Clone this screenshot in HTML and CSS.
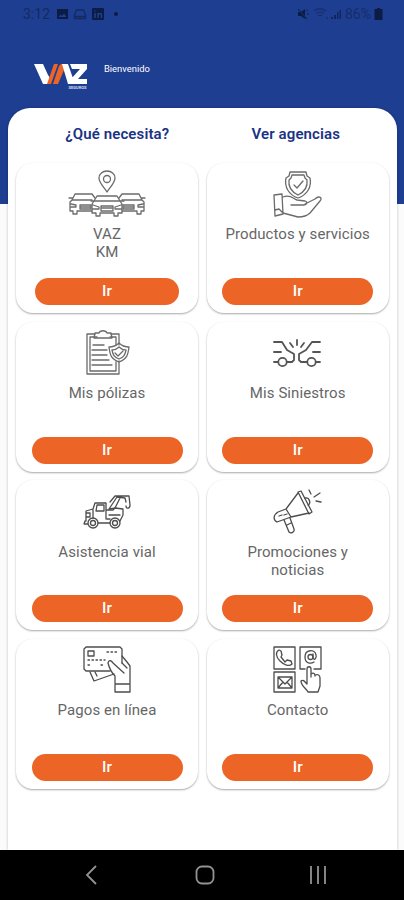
FILE: index.html
```
<!DOCTYPE html>
<html lang="es">
<head>
  <meta charset="UTF-8"/>
  <meta name="viewport" content="width=device-width, initial-scale=1.0"/>
  <title>VAZ Seguros</title>
  <link rel="stylesheet" href="styles.css">
</head>
<body>

  <header class="header">
    <div class="status-bar">
      <div class="status-left">
        <span class="clock">3:12</span>
        <svg width="70" height="14" viewBox="0 0 70 14">
          <path fill-rule="evenodd" d="M1 2h11v10H1zM2.500 10h8L8 6.500 6 9 4.500 7.500z"/>
          <path class="thin" d="M20.500 3h7l2 5v3.500h-11V8zM18.500 9.500h11"/>
          <rect x="36" y="1" width="12" height="12" rx="1"/>
          <path class="in-mark" d="M39 6v5M39 3.500v1M42 11V6M42 8c1-2 3.500-2 3.500 0v3"/>
          <circle cx="60" cy="7" r="2"/>
        </svg>
      </div>
      <div class="status-right">
        <svg width="48" height="14" viewBox="0 0 48 14">
          <path d="M2 5h3l4-3v10L5 9H2z"/>
          <path class="thin" d="M2 2l9 10M10 4l2-1M11 7h2"/>
          <path class="thin faint" d="M18 4c4-3 8-3 12 0M20 6.500c3-2 6-2 8 0M22 9c1.500-1 3-1 4 0M30 11h2"/>
          <path class="faint" d="M35 12V10h2v2zM38 12V8h2v4zM41 12V5h1.500v7zM43.500 12V3H45v9z"/>
        </svg>
        <span class="battery-level">86%</span>
        <svg width="9" height="12" viewBox="0 0 9 12"><path d="M3 0h3v1h2.500v11h-8V1H3z"/></svg>
      </div>
    </div>

    <div class="brand">
      <svg class="logo" width="55" height="27" viewBox="0 0 55 27">
        <path class="white" d="M0 2h9l5 11 2 3-2 6h-5z"/>
        <path class="orange" d="M20 2h4l-7 20h-4zM25 4l2-2h2l1 6-6 14h-5z"/>
        <path class="white" d="M28 2h6l7 20h-7zM36 2h17v5l-9 10h9v5H37v-5l9-10h-8z"/>
        <text x="34.500" y="26.500" textLength="18">SEGUROS</text>
      </svg>
      <span class="welcome">Bienvenido</span>
    </div>
  </header>

  <main class="panel">
    <div class="tabs">
      <a class="tab">¿Qué necesita?</a>
      <a class="tab">Ver agencias</a>
    </div>

    <section class="grid">
      <article class="card">
        <svg class="icon wide" viewBox="0 0 78 48">
          <path d="M39 22c-3-5-8-9-8-14a8 7 0 0 1 16 0c0 5-5 9-8 14z"/>
          <circle cx="39" cy="9" r="3.500"/>
          <path d="M26 31l3-5h20l3 5 2 3v9h-4v3h-4v-3H32v3h-4v-3h-4v-9zM26 31h26M23 31h3M52 31h4M25 35l6 2v2h-6M53 35l-6 2v2h6M33 36h12v5H33zM34 38h10"/>
          <path d="M27 28l-3-4H7l-3 6-2 2v9h3v3h4v-3h15M4 30h20M1 28h4M3 34l5 1v2H3M12 35h11v4H12zM13 37h10"/>
          <path d="M51 28l3-4h17l3 6 2 2v9h-3v3h-4v-3H54M54 30h20M73 28h4M75 34l-5 1v2h5M55 35h11v4H55zM56 37h9"/>
        </svg>
        <h2 class="card-title">VAZ<br>KM</h2>
        <button class="go narrow">Ir</button>
      </article>

      <article class="card">
        <svg class="icon" viewBox="0 0 48 48">
          <path d="M16 2h16l1 4 3 2c2 9-3 17-12 20C15 25 10 17 12 8l3-2z"/>
          <path d="M18 5h12l1 3 2 2c1 7-3 12-9 15-6-3-10-8-9-15l2-2z"/>
          <path d="M20 15l3 3 6-7"/>
          <path d="M0 25l8-1 1 20-8 2zM1 40l4-1 4 4M9 27c8-3 10 2 14 3l8 1c3 1 2 4-1 4H17M31 34l10-5c4-4 8-1 5 2L36 43c-3 3-6 4-12 4L9 43"/>
        </svg>
        <h2 class="card-title">Productos y servicios</h2>
        <button class="go">Ir</button>
      </article>

      <article class="card">
        <svg class="icon" viewBox="0 0 48 48">
          <path d="M12 5H4v40h32V32M28 5h8v11M14 8H7v34h26V33M27 8h6v8"/>
          <path d="M12 4h4c1-3 7-3 8 0h4l1 5H11z"/>
          <path d="M10 16h11M9 21h15M9 26h15M9 31h17M9 36h20"/>
          <path d="M36 14c3 3 6 4 10 4-1 8-2 12-10 15-8-3-9-7-10-15 4 0 7-1 10-4z"/>
          <path d="M36 18c2 2 4 3 7 3-1 5-2 7-7 9-5-2-6-4-7-9 3 0 5-1 7-3zM32 24l3 3 5-5"/>
        </svg>
        <h2 class="card-title">Mis pólizas</h2>
        <button class="go">Ir</button>
      </article>

      <article class="card">
        <svg class="icon bold" viewBox="0 0 48 48">
          <path d="M0 13h8l5 8 7 4v6l-2 2h-5M0 33h4M0 23h7"/>
          <circle cx="8.500" cy="33" r="4.200"/>
          <path d="M46 13h-8l-6 8-7 4v6l2 2h6M42 33h4M39 23h7"/>
          <circle cx="37.500" cy="33" r="4.200"/>
          <path d="M23 11v5M16 14l3 4M30 14l-3 4"/>
        </svg>
        <h2 class="card-title">Mis Siniestros</h2>
        <button class="go">Ir</button>
      </article>

      <article class="card">
        <svg class="icon dark" viewBox="0 0 48 48">
          <path d="M3 34V24l7-2 2-6h11v16M14 18h7v6h-8zM10 23v8M2 34l-1 3h4M15 36h12M23 23h7l2-2 8 1v6l-3 6M3 26h4v4H3M26 28h11M24 32h3"/>
          <path d="M26 22l8-12 8 1 1 4M27 15l5-6h14l1 9c0 4-4 4-4 1M32 21l5-10M26 22l7-1"/>
          <circle cx="10" cy="36" r="5"/><circle cx="10" cy="36" r="2.500"/>
          <circle cx="32" cy="36" r="5"/><circle cx="32" cy="36" r="2.500"/>
        </svg>
        <h2 class="card-title">Asistencia vial</h2>
        <button class="go">Ir</button>
      </article>

      <article class="card">
        <svg class="icon dark" viewBox="0 0 48 48">
          <path d="M24 5l3-1 11 21-3 2zM24 6L12 22 4 25c-5 3-5 8-1 10l14-5 18-4M12 22l5 8"/>
          <path d="M10 33l5 12c2 2 6 0 5-3l-4-11M31 11c5-1 6 6 3 7M5 29l3-1M10 28l3-1M13 38l4-2"/>
          <path d="M35 3l2 4M46 6l-6 4M42 14l5 1"/>
        </svg>
        <h2 class="card-title">Promociones y noticias</h2>
        <button class="go">Ir</button>
      </article>

      <article class="card">
        <svg class="icon dark" viewBox="0 0 48 48">
          <path d="M3 1h34l2 2v14M27 25H3l-2-2V3l2-2"/>
          <path d="M5 5h6v5H5z"/>
          <path class="dashed" d="M24 6h11M5 14h17M5 19h4M18 19h4"/>
          <path d="M7 26l4 9 20-7M12 26l2 4"/>
          <path d="M32 37v-7c-4-4-6-9-7-13 1-4 4-2 5 0l11 10M39 10l5 6 3 4v17M39 17l5 5M32 38h15v8H32z"/>
        </svg>
        <h2 class="card-title">Pagos en línea</h2>
        <button class="go">Ir</button>
      </article>

      <article class="card">
        <svg class="icon dark" viewBox="0 0 48 48">
          <path d="M0 1h21v22H0zM26 1h21v22h-7M31 23h-5V1M0 26h21v20H0z"/>
          <path d="M5 4c-4 2-3 7 1 11s9 6 12 3l-1-3-4-1-2 2-4-5 1-2-1-4z"/>
          <circle cx="36.500" cy="11" r="2.500"/>
          <path d="M39 8v4c1 3 4 0 3-3-1-6-11-6-11 2 0 7 6 7 9 5"/>
          <path d="M4 31h14v11H4zM4 31l7 7 7-7M4 42l5-6M18 42l-5-6"/>
          <path d="M34 46c-2-4-7-6-7-11 2-2 4 1 6 3V23c0-3 4-3 4 0v8M37 28c3-2 4 0 4 2M41 29c3-1 5 0 5 3v8l-2 6H34"/>
        </svg>
        <h2 class="card-title">Contacto</h2>
        <button class="go">Ir</button>
      </article>
    </section>
  </main>

  <nav class="nav-bar">
    <svg viewBox="0 0 24 24"><path d="M16 3L7 12l9 9"/></svg>
    <svg viewBox="0 0 24 24"><rect x="3.500" y="3.500" width="17" height="17" rx="5.500"/></svg>
    <svg viewBox="0 0 24 24"><path d="M5 3v18M12 3v18M19 3v18"/></svg>
  </nav>

</body>
</html>
```
FILE: styles.css
```
* {
  box-sizing: border-box;
  margin: 0;
  padding: 0;
}

body {
  font-family: Roboto, sans-serif;
  width: 404px;
  height: 900px;
  overflow: hidden;
  display: flex;
  flex-direction: column;
  background: linear-gradient(#1e3e92 204px, #fbfbfb 204px);
}

svg {
  display: block;
}

.header {
  height: 108px;
}

/* Status bar */
.status-bar {
  display: flex;
  justify-content: space-between;
  height: 28px;
  padding: 0 21px 0 23px;
  color: #142a61;
  fill: #0c1c45;
}

.status-left,
.status-right {
  display: flex;
  align-items: center;
}

.status-left {
  gap: 6px;
}

.status-right {
  gap: 1px;
}

.clock,
.battery-level {
  font-size: 14px;
}

.battery-level {
  width: 28px;
  color: #152d69;
}

.clock {
  width: 27px;
}

.status-bar .thin {
  fill: none;
  stroke: #142a61;
  stroke-width: 1.3;
}

.faint {
  opacity: 0.7;
}

.status-bar .in-mark {
  fill: none;
  stroke: #1e3e92;
  stroke-width: 1.5;
}

/* Logo and greeting */
.brand {
  display: flex;
  gap: 15px;
  padding: 34px 0 0 34px;
}

.logo .white {
  fill: #fff;
}

.logo .orange {
  fill: #ec6527;
}

.logo text {
  font-size: 4px;
  font-weight: 700;
  fill: #d5dcec;
}

.welcome {
  font-size: 9.4px;
  line-height: 13px;
  color: #fff;
}

/* White panel */
.panel {
  flex: 1;
  margin: 0 7px 0 8px;
  padding: 17px 8px 0;
  background: #fff;
  border-radius: 22px 22px 0 0;
  box-shadow: 0 0 3px rgba(0, 0, 0, 0.25);
}

.tabs {
  display: grid;
  grid-template-columns: 1fr 1fr;
  column-gap: 8px;
}

.tab {
  font-size: 15px;
  font-weight: 600;
  line-height: 18px;
  letter-spacing: 0.12px;
  text-align: center;
  color: #1b3384;
}

.tab:first-child {
  padding-left: 20px;
}

.tab:last-child {
  padding-right: 4px;
}

.grid {
  display: grid;
  grid-template-columns: 182px 182px;
  grid-auto-rows: 150px;
  gap: 8.7px;
  padding-top: 20px;
}

.card {
  display: flex;
  flex-direction: column;
  align-items: center;
  padding: 7px 15px 8px;
  background: #fff;
  border-radius: 17px;
  box-shadow: 0 1px 2px rgba(0, 0, 0, 0.34);
}

.icon {
  width: 48px;
  height: 48px;
  overflow: visible;
  fill: none;
  stroke: #6b6b6b;
  stroke-width: 1.3;
  stroke-linecap: round;
  stroke-linejoin: round;
}

.icon.wide {
  width: 78px;
}

.icon.bold {
  stroke: #555;
  stroke-width: 1.8;
}

.icon.dark {
  stroke: #4d4d4d;
}

.icon .dashed {
  stroke-dasharray: 1.5 2.5;
}

.card-title {
  width: 150px;
  margin-top: 7.4px;
  font-size: 15px;
  font-weight: 400;
  line-height: 18px;
  letter-spacing: 0.08px;
  text-align: center;
  color: #666;
}

.go {
  width: 151px;
  height: 27px;
  margin-top: auto;
  border: none;
  border-radius: 14px;
  background: #ec6527;
  color: #fff;
  font-family: inherit;
  font-size: 15.5px;
  font-weight: 500;
  line-height: 27px;
}

.go.narrow {
  width: 144px;
}

/* Android navigation */
.nav-bar {
  display: flex;
  justify-content: center;
  align-items: center;
  gap: 89px;
  height: 50px;
  padding-left: 5px;
  background: #000;
}

.nav-bar svg {
  width: 24px;
  height: 24px;
  fill: none;
  stroke: #929292;
  stroke-width: 1.8;
}
```
